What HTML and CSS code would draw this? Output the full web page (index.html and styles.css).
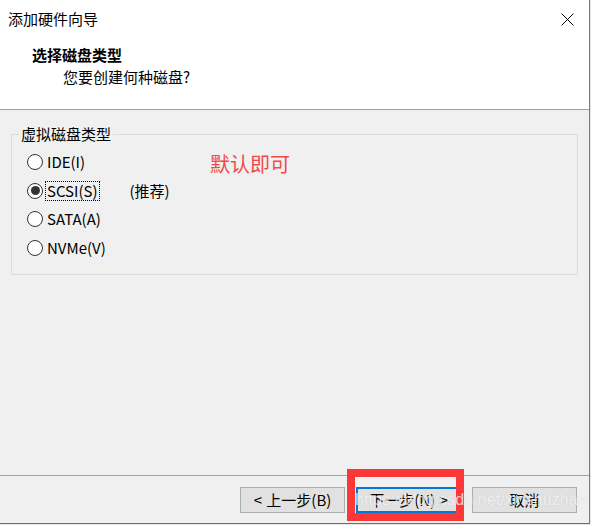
FILE: index.html
```html
<!DOCTYPE html>
<html lang="zh-CN">
<head>
<meta charset="utf-8">
<title>添加硬件向导</title>
<link rel="stylesheet" href="styles.css">
</head>
<body>
<div class="window">
  <div class="header">
    <div class="titlebar">
      <span class="title">添加硬件向导</span>
      <span class="close">
        <svg width="13" height="13" viewBox="0 0 13 13"><path d="M0.5 0.5 L12.5 12.5 M12.5 0.5 L0.5 12.5" stroke="#000" stroke-width="1" fill="none"/></svg>
      </span>
    </div>
    <div class="heading">选择磁盘类型</div>
    <div class="subtitle">您要创建何种磁盘?</div>
  </div>
  <div class="content">
    <fieldset class="group">
      <legend>虚拟磁盘类型</legend>
      <div class="note">默认即可</div>
      <div class="row"><span class="radio"></span><span class="label">IDE(I)</span></div>
      <div class="row"><span class="radio checked"></span><span class="label focus">SCSI(S)</span><span class="rec">(推荐)</span></div>
      <div class="row"><span class="radio"></span><span class="label">SATA(A)</span></div>
      <div class="row"><span class="radio"></span><span class="label">NVMe(V)</span></div>
    </fieldset>
  </div>
  <div class="footer">
    <button class="btn">&lt; 上一步(B)</button>
    <button class="btn primary">下一步(N) &gt;</button>
    <button class="btn">取消</button>
    <div class="redbox"></div>
    <div class="watermark">https://blog.csdn.net/xinshuzhan</div>
  </div>
</div>
</body>
</html>
```

FILE: styles.css
```css
html, body {
  margin: 0;
  padding: 0;
  background: #e6e6e6;
}
body {
  font-family: "Noto Sans CJK SC", "Noto Sans", sans-serif;
  font-size: 15px;
  color: #000;
}
.window {
  width: 589px;
  height: 523px;
  border-right: 1px solid #7a7a7a;
  border-bottom: 1px solid #6e6e6e;
  background: #f0f0f0;
  display: flex;
  flex-direction: column;
  position: relative;
  overflow: hidden;
}
.header {
  background: #fff;
  height: 109px;
  border-bottom: 1px solid #a0a0a0;
  box-sizing: content-box;
  flex: none;
}
.titlebar {
  height: 38px;
  display: flex;
  align-items: center;
  justify-content: space-between;
  padding: 0 15px 0 8px;
}
.title {
  font-size: 15px;
  line-height: 20px;
}
.close {
  display: flex;
  width: 13px;
  height: 13px;
}
.heading {
  margin-top: 7px;
  padding-left: 32px;
  font-weight: bold;
  font-size: 15px;
  line-height: 20px;
}
.subtitle {
  margin-top: 2px;
  padding-left: 63px;
  font-size: 15px;
  line-height: 20px;
}
.content {
  flex: 1;
  padding: 14px 11px 0 11px;
}
.group {
  margin: 0;
  padding: 4px 0 12px 0;
  border: 1px solid #dcdcdc;
  position: relative;
  min-width: 0;
}
.group legend {
  margin-left: 7px;
  padding: 0 2px;
  line-height: 20px;
  font-size: 15px;
}
.note {
  position: absolute;
  left: 198px;
  top: 7px;
  color: #f24848;
  font-size: 20px;
  line-height: 26px;
}
.row {
  height: 28.5px;
  display: flex;
  align-items: center;
  padding-left: 15px;
}
.radio {
  width: 14px;
  height: 14px;
  border: 1px solid #333;
  border-radius: 50%;
  background: #fff;
  position: relative;
  flex: none;
}
.radio.checked::after {
  content: "";
  position: absolute;
  left: 2.5px;
  top: 2.5px;
  width: 9px;
  height: 9px;
  border-radius: 50%;
  background: #333;
}
.label {
  margin-left: 2px;
  padding: 0 1px;
  line-height: 18px;
  border: 1px dotted transparent;
}
.label.focus {
  border-color: #000;
}
.rec {
  margin-left: 30px;
  line-height: 18px;
}
.footer {
  flex: none;
  border-top: 1px solid #a0a0a0;
  display: flex;
  justify-content: flex-end;
  align-items: flex-start;
  gap: 11px;
  padding: 11px 12px 0 0;
  box-sizing: border-box;
  height: 48px;
  position: relative;
}
.btn {
  width: 105px;
  height: 26px;
  margin: 0;
  padding: 0;
  border: 1px solid #adadad;
  background: #e1e1e1;
  font-family: "Noto Sans CJK SC", "Noto Sans", sans-serif;
  font-size: 15px;
  line-height: 22px;
  color: #000;
  word-spacing: 1px;
}
.btn.primary {
  border: 2px solid #0078d7;
}
.redbox {
  position: absolute;
  left: 347px;
  top: -7px;
  width: 117px;
  height: 52px;
  border: 8px solid #fb3737;
  box-sizing: border-box;
}
.watermark {
  position: absolute;
  left: 355px;
  top: 14px;
  font-family: "Liberation Sans", Arial, sans-serif;
  font-size: 16px;
  line-height: 20px;
  color: rgba(255, 255, 255, 0.7);
  text-shadow: 0 0 1px rgba(150, 150, 150, 0.35);
  letter-spacing: 0.1px;
  white-space: nowrap;
}
```
